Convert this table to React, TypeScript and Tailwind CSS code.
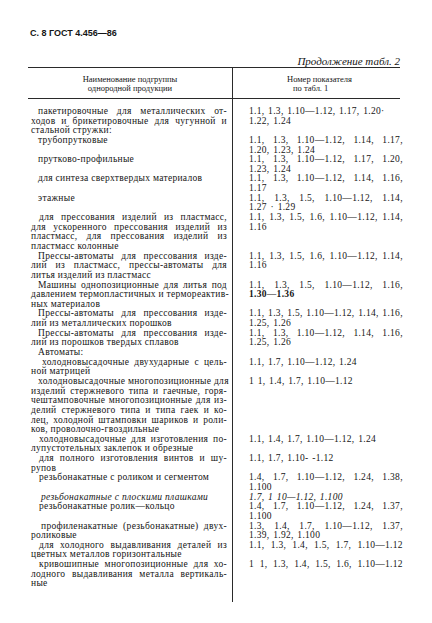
type Row = { ind?: string; left: string[]; right: string[] }

// '=' justify the line, '*' bold, '/' italic
const rows: Row[] = [
  {
    ind: 'pl-[7px]',
    left: ['=пакетировочные для металлических от-', '=ходов и брикетировочные для чугунной и', 'стальной стружки:'],
    right: ['1.1, 1.3, 1.10—1.12, 1.17, 1.20·', '1.22, 1.24'],
  },
  { ind: 'pl-[7px]', left: ['трубопрутковые'], right: ['=1.1, 1.3, 1.10—1.12, 1.14, 1.17,', '1.20, 1.23, 1.24'] },
  { ind: 'pl-[7px]', left: ['прутково-профильные'], right: ['=1.1, 1.3, 1.10—1.12, 1.17, 1.20,', '1.23, 1.24'] },
  { ind: 'pl-[7px]', left: ['для синтеза сверхтвердых материалов'], right: ['=1.1, 1.3, 1.10—1.12, 1.14, 1.16,', '1.17'] },
  { ind: 'pl-[7px]', left: ['этажные'], right: ['=1.1, 1.3, 1.5, 1.10—1.12, 1.14,', '1.27 · 1.29'] },
  {
    ind: 'pl-[8px]',
    left: ['=для прессования изделий из пластмасс,', '=для ускоренного прессования изделий из', '=пластмасс, для прессования изделий из', 'пластмасс колонные'],
    right: ['=1.1, 1.3, 1.5, 1.6, 1.10—1.12, 1.14,', '1.16'],
  },
  {
    ind: 'pl-[7px]',
    left: ['=Прессы-автоматы для прессования изде-', '=лий из пластмасс, прессы-автоматы для', 'литья изделий из пластмасс'],
    right: ['=1.1, 1.3, 1.5, 1.6, 1.10—1.12, 1.14,', '1.16'],
  },
  {
    ind: 'pl-[7px]',
    left: ['=Машины однопозиционные для литья под', '=давлением термопластичных и термореактив-', 'ных материалов'],
    right: ['=1.1, 1.3, 1.5, 1.10—1.12, 1.16,', '*1.30—1.36'],
  },
  {
    ind: 'pl-[7px]',
    left: ['=Прессы-автоматы для прессования изде-', 'лий из металлических порошков'],
    right: ['=1.1, 1.3, 1.5, 1.10—1.12, 1.14, 1.16,', '1.25, 1.26'],
  },
  {
    ind: 'pl-[7px]',
    left: ['=Прессы-автоматы для прессования изде-', 'лий из порошков твердых сплавов'],
    right: ['=1.1, 1.3, 1.10—1.12, 1.14, 1.16,', '1.25, 1.26'],
  },
  { ind: 'pl-[7px]', left: ['Автоматы:'], right: [] },
  {
    ind: 'pl-[11px]',
    left: ['=холодновысадочные двухударные с цель-', 'ной матрицей'],
    right: ['1.1, 1.7, 1.10—1.12, 1.24'],
  },
  {
    ind: 'pl-[7px]',
    left: [
      '=холодновысадочные многопозиционные для',
      '=изделий стержневого типа и гаечные, горя-',
      '=чештамповочные многопозиционные для из-',
      '=делий стержневого типа и типа гаек и ко-',
      '=лец, холодной штамповки шариков и роли-',
      'ков, проволочно-гвоздильные',
    ],
    right: ['1 1, 1.4, 1.7, 1.10—1.12'],
  },
  {
    ind: 'pl-[8px]',
    left: ['=холодновысадочные для изготовления по-', 'лупустотельных заклепок и обрезные'],
    right: ['1.1, 1.4, 1.7, 1.10—1.12, 1.24'],
  },
  {
    ind: 'pl-[8px]',
    left: ['=для полного изготовления винтов и шу-', 'рупов'],
    right: ['1.1, 1.7, 1.10- -1.12'],
  },
  { ind: 'pl-[8px]', left: ['резьбонакатные с роликом и сегментом'], right: ['=1.4, 1.7, 1.10—1.12, 1.24, 1.38,', '1.100'] },
  { ind: 'pl-[10px]', left: ['/резьбонакатные с плоскими плашками'], right: ['/1.7, 1 10—1.12, 1.100'] },
  { ind: 'pl-[8px]', left: ['резьбонакатные ролик—кольцо'], right: ['=1.4, 1.7, 1.10—1.12, 1.24, 1.37,', '1.100'] },
  {
    ind: 'pl-[10px]',
    left: ['=профиленакатные (резьбонакатные) двух-', 'роликовые'],
    right: ['=1.3, 1.4, 1.7, 1.10—1.12, 1.37,', '1.39, 1.92, 1.100'],
  },
  {
    ind: 'pl-[8px]',
    left: ['=для холодного выдавливания деталей из', 'цветных металлов горизонтальные'],
    right: ['=1.1, 1.3, 1.4, 1.5, 1.7, 1.10—1.12'],
  },
  {
    ind: 'pl-[8px]',
    left: ['=кривошипные многопозиционные для хо-', '=лодного выдавливания металла вертикаль-', 'ные'],
    right: ['=1 1, 1.3, 1.4, 1.5, 1.6, 1.10—1.12'],
  },
]

function Line({ text, className = '' }: { text: string; className?: string }) {
  let t = text
  let cls = 'h-[9.65px] leading-[9.65px] whitespace-nowrap '
  while (t[0] === '=' || t[0] === '*' || t[0] === '/') {
    if (t[0] === '=') cls += 'text-justify [text-align-last:justify] '
    if (t[0] === '*') cls += 'font-bold '
    if (t[0] === '/') cls += 'italic '
    t = t.slice(1)
  }
  return <div className={cls + className}>{t}</div>
}

function TableRow({ row }: { row: Row }) {
  return (
    <>
      <div className="border-r-[1.5px] border-[#2a2a2a] pl-[3px] pr-[5px]">
        {row.left.map((l, i) => (
          <Line key={i} text={l} className={i === 0 ? row.ind : ''} />
        ))}
      </div>
      <div className="pl-[16px] pr-[7px] [word-spacing:1px]">
        {row.right.map((l, i) => (
          <Line key={i} text={l} />
        ))}
      </div>
    </>
  )
}

export default function App() {
  return (
    <div className="w-[432px] h-[623px] bg-white overflow-hidden font-['Liberation_Serif',serif] text-[#151515]">
      <div className="pl-[30px] pr-[32px] pt-[28px]">
        {/* Шапка страницы */}
        <div className="h-[10px] leading-[10px] text-[9px] font-bold font-['Liberation_Sans',sans-serif]">
          С. 8 ГОСТ 4.456—86
        </div>
        <div className="mt-[17px] h-[12px] leading-[12px] text-right italic text-[11px]">
          Продолжение табл. 2
        </div>

        <div className="-ml-[2px] border-t-[1.5px] border-[#2a2a2a]">
          {/* Заголовок таблицы */}
          <div className="grid grid-cols-[205px_1fr] h-[31px] border-b-[1.5px] border-[#2a2a2a] text-[8.5px] leading-[8.5px]">
            <div className="border-r-[1.5px] border-[#2a2a2a] pt-[7px] text-center">
              <div>Наименование подгруппы</div>
              <div>однородной продукции</div>
            </div>
            <div className="pt-[7px] pl-[54px]">
              <div>Номер показателя</div>
              <div className="pl-[6px]">по табл. 1</div>
            </div>
          </div>

          {/* Тело таблицы */}
          <div className="grid grid-cols-[205px_1fr] text-[9.5px] tracking-[0.3px]">
            <div className="h-[8px] border-r-[1.5px] border-[#2a2a2a]" />
            <div />
            {rows.map((r, i) => (
              <TableRow key={i} row={r} />
            ))}
            <div className="h-[13px] border-r-[1.5px] border-[#2a2a2a]" />
            <div />
          </div>
        </div>
      </div>
    </div>
  )
}
